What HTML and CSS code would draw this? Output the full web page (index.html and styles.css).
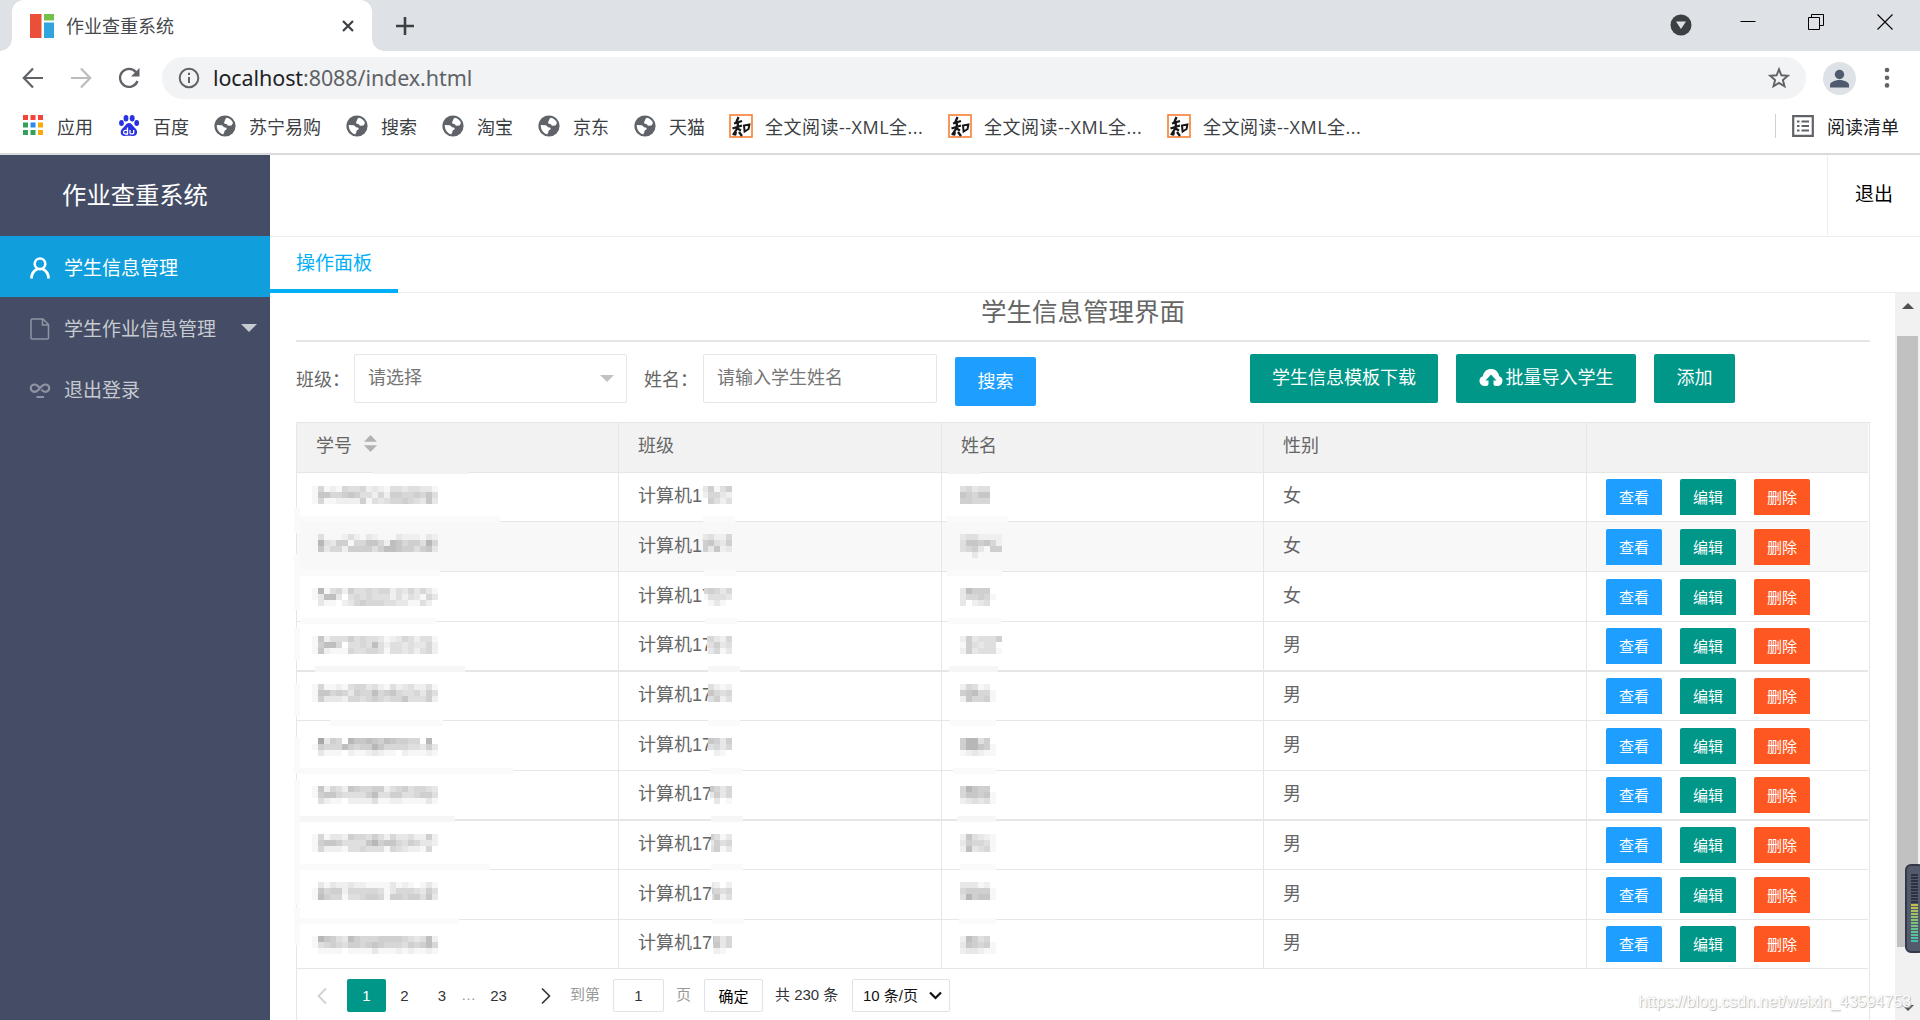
FILE: index.html
```html
<!DOCTYPE html>
<html lang="zh-CN">
<head>
<meta charset="utf-8">
<title>作业查重系统</title>
<link rel="stylesheet" href="styles.css">
</head>
<body>
<svg width="0" height="0" class="defs">
  <symbol id="globe" viewBox="0 0 24 24"><circle cx="12" cy="12" r="10.6" fill="#5f6368"/><path d="M3.800 11l5 .2c1.300.2 1.500 2.300 3.600 2.300 1.800 0 1.600 2.200.2 2.400-1.200.2-1 1.400-1.300 2.300-.2.900-1 1.300-.8 2.200C6.500 19.700 3.500 15.500 3.800 11zM13.500 3.800c3 .3 5.500 2.500 6.500 5.200l-1.500 2.500-2.800.3c-1.400.1-1.200-1.900-2.700-1.900-1.600 0-2.600-.9-1.600-2.200.8-1 .5-2.800 2.100-3.900z" fill="#fff"/></symbol>
  <symbol id="zhi" viewBox="0 0 24 24"><rect x="1" y="1" width="22" height="22" fill="#fff" stroke="#fa7d33" stroke-width="1.600"/><path d="M9.500 3L7 9M5 9.500l8-2.500M3.500 14.500l9.500-3M9 8.500L8.500 14l-4.500 7M8.500 14.500l3.500 2M7 18l-1 3.500M10 18l3 4" fill="none" stroke="#161616" stroke-width="2.300"/><path d="M15 11.500l.6 6 4-2.500.8-4.500z" fill="none" stroke="#161616" stroke-width="2"/></symbol>
</svg>

<header class="tabstrip">
  <div class="tab">
    <svg width="24" height="24" viewBox="0 0 24 24"><path fill="#ec4f38" d="M0 0h11.500v24H0z"/><path fill="#75c04b" d="M14 0h10v6.500H14z"/><path fill="#31a3dd" d="M14 8.500h10V24H14z"/></svg>
    <span class="tab-title">作业查重系统</span>
    <svg class="tab-close" width="12" height="12" viewBox="0 0 12 12"><path d="M1 1l10 10M11 1L1 11" stroke="#3c4043" stroke-width="2.200"/></svg>
  </div>
  <svg class="new-tab" width="18" height="18" viewBox="0 0 18 18"><path d="M9 0v18M0 9h18" stroke="#3c4043" stroke-width="2.600"/></svg>
  <div class="window-controls">
    <svg width="22" height="22" viewBox="0 0 22 22"><circle cx="11" cy="11" r="10.500" fill="#3c4043"/><path d="M6 7.500h10L11 15z" fill="#dee1e6"/></svg>
    <svg width="16" height="16" viewBox="0 0 16 16"><path d="M.5 7.500h15" stroke="#000"/></svg>
    <svg width="16" height="16" viewBox="0 0 16 16"><path d="M.5 3.500h11v12H.5zM3.500 3.500v-3h12v11h-3.500" fill="none" stroke="#000"/></svg>
    <svg width="16" height="16" viewBox="0 0 16 16"><path d="M.5.5l15 15M15.500.5l-15 15" stroke="#000" stroke-width="1.100"/></svg>
  </div>
</header>

<div class="toolbar">
  <svg width="24" height="24" viewBox="0 0 24 24"><path d="M22 12H3M12 2.500L2.800 12l9.200 9.500" fill="none" stroke="#5f6368" stroke-width="2.200"/></svg>
  <svg width="24" height="24" viewBox="0 0 24 24"><path d="M2 12h19M12 2.500l9.200 9.500-9.200 9.500" fill="none" stroke="#babcbe" stroke-width="2.200"/></svg>
  <svg width="24" height="24" viewBox="0 0 24 24"><path d="M20.500 15A9 9 0 1 1 19 6.200" fill="none" stroke="#5f6368" stroke-width="2.300"/><path d="M22.500 2v8.500H14z" fill="#5f6368"/></svg>
  <div class="address">
    <svg width="22" height="22" viewBox="0 0 22 22"><circle cx="11" cy="11" r="9.300" fill="none" stroke="#5f6368" stroke-width="2"/><path d="M11 10v6M11 5.800V8" stroke="#5f6368" stroke-width="2"/></svg>
    <span class="url"><b>localhost</b>:8088/index.html</span>
    <svg class="star" width="24" height="24" viewBox="0 0 24 24"><path d="M12 3.300l2.400 6 6.400.5-4.900 4.200 1.600 6.300L12 16.900l-5.500 3.400L8.100 14 3.200 9.800l6.400-.5z" fill="none" stroke="#5f6368" stroke-width="1.900"/></svg>
  </div>
  <span class="avatar"><svg width="33" height="33" viewBox="0 0 33 33"><circle cx="16.500" cy="12.500" r="4.700" fill="#4f5a6e"/><path d="M7 25.500v-2.500c0-3.300 6.300-5 9.500-5s9.500 1.700 9.500 5v2.500z" fill="#4f5a6e"/></svg></span>
  <svg class="menu-dots" width="6" height="22" viewBox="0 0 6 22"><g fill="#5f6368"><circle cx="3" cy="3" r="2.300"/><circle cx="3" cy="10.700" r="2.300"/><circle cx="3" cy="18.400" r="2.300"/></g></svg>
</div>

<nav class="bookmarks">
  <a><svg width="24" height="24" viewBox="0 0 24 24"><path fill="#f4433b" d="M2 1h5v5H2zM9.500 1h5v5h-5zM17 1h5v5h-5z"/><path fill="#34a05a" d="M2 8.500h5v5H2zM2 16h5v5H2zM9.500 16h5v5h-5z"/><path fill="#2a8af0" d="M9.500 8.500h5v5h-5z"/><path fill="#f9ab0b" d="M17 8.500h5v5h-5zM17 16h5v5h-5z"/></svg><span>应用</span></a>
  <a><svg width="24" height="24" viewBox="0 0 24 24"><g fill="#2932e1"><ellipse cx="4.500" cy="9" rx="2.400" ry="3"/><ellipse cx="9" cy="4.200" rx="2.400" ry="3.200"/><ellipse cx="15.200" cy="4.200" rx="2.400" ry="3.200"/><ellipse cx="19.700" cy="9" rx="2.400" ry="3"/><path d="M12 9c3 0 4 3.500 6 5 3.500 3 2.500 8-2 8-2 0-6-.4-8 0-5 .5-5.500-5.500-2-8 2-1.500 3-5 6-5z"/></g><path d="M10.500 13.500V20H8.200c-2.200 0-2.200-3.700 0-3.700h2.300M13 16v3c0 1.200 3.700 1.400 3.700 0v-3" fill="none" stroke="#fff" stroke-width="1.300"/></svg><span>百度</span></a>
  <a><svg width="24" height="24"><use href="#globe"/></svg><span>苏宁易购</span></a>
  <a><svg width="24" height="24"><use href="#globe"/></svg><span>搜索</span></a>
  <a><svg width="24" height="24"><use href="#globe"/></svg><span>淘宝</span></a>
  <a><svg width="24" height="24"><use href="#globe"/></svg><span>京东</span></a>
  <a><svg width="24" height="24"><use href="#globe"/></svg><span>天猫</span></a>
  <a><svg width="24" height="24"><use href="#zhi"/></svg><span class="long">全文阅读--XML全...</span></a>
  <a><svg width="24" height="24"><use href="#zhi"/></svg><span class="long">全文阅读--XML全...</span></a>
  <a><svg width="24" height="24"><use href="#zhi"/></svg><span class="long">全文阅读--XML全...</span></a>
  <div class="reading-list"><svg width="22" height="22" viewBox="0 0 22 22"><path d="M1.200 1.200h19.600v19.600H1.200z" fill="none" stroke="#5f6368" stroke-width="2.200"/><path d="M5 6.500h2.500M9.500 6.500H17M5 11h2.500M9.500 11H17M5 15.500h2.500M9.500 15.500H17" stroke="#5f6368" stroke-width="2.200"/></svg><span>阅读清单</span></div>
</nav>

<div class="app">
  <aside class="sidebar">
    <h1>作业查重系统</h1>
    <a class="nav-item active"><svg width="20" height="22" viewBox="0 0 20 22"><circle cx="10" cy="6.800" r="5.300" fill="none" stroke="#fff" stroke-width="2.600"/><path d="M1.500 21.500c0-5 2.500-8 6-9.500M18.500 21.500c0-5-2.500-8-6-9.500" fill="none" stroke="#fff" stroke-width="2.800"/></svg><span>学生信息管理</span></a>
    <a class="nav-item"><svg width="20" height="22" viewBox="0 0 20 22"><path d="M1 2.200q0-1.200 1.200-1.200H13l5.500 5.500V20q0 1-1 1H2q-1 0-1-1zM12.500 1v6h6" fill="none" stroke="#8f94a2" stroke-width="1.500"/></svg><span>学生作业信息管理</span><i class="caret"></i></a>
    <a class="nav-item"><svg width="22" height="18" viewBox="0 0 22 18"><path d="M11 7.500C8.500 4 7.200 3.500 5.500 3.500a3.700 3.700 0 1 0 0 7.400c2.500 0 4-1.700 5.500-3.700s3-3.700 5.500-3.700a3.700 3.700 0 1 1 0 7.400c-1.700 0-3-1-4-2.300" fill="none" stroke="#8f94a2" stroke-width="2.200"/><path d="M7.500 16h7.500" stroke="#8f94a2" stroke-width="2"/></svg><span>退出登录</span></a>
  </aside>
  <main class="main">
    <div class="topbar"><a class="logout">退出</a></div>
    <div class="page-tabs"><span class="page-tab">操作面板</span></div>
    <div class="viewport">
      <section class="content">
        <h2>学生信息管理界面</h2>
        <form class="filters">
          <label>班级：</label>
          <div class="field select">请选择<i class="caret"></i></div>
          <label class="name-label">姓名：</label>
          <div class="field name">请输入学生姓名</div>
          <span class="btn blue search">搜索</span>
          <span class="btn template">学生信息模板下载</span>
          <span class="btn import"><svg width="24" height="22" viewBox="0 0 24 22"><path d="M7 19H5.500A5 5 0 0 1 3.800 9.300C4.600 4.500 8 2 12 2s7.400 2.500 8.200 7.300A5 5 0 0 1 18.500 19H17q-2.500 0-2.500-2.500V13.500h3L12 7.500 6.500 13.500h3v3Q9.500 19 7 19z" fill="#fff"/></svg>批量导入学生</span>
          <span class="btn add">添加</span>
        </form>
        <div class="table">
          <div class="row head"><div>学号<i class="sort"></i></div><div>班级</div><div>姓名</div><div>性别</div><div></div></div>
          <div class="rows"></div>
          <svg class="mosaic" width="720" height="560" shape-rendering="crispEdges"></svg>
          <div class="pager">
            <svg class="prev" width="10" height="18" viewBox="0 0 10 18"><path d="M9 1.500L1.500 9 9 16.500" fill="none" stroke="#d2d2d2" stroke-width="1.800"/></svg>
            <span class="current">1</span><span class="p2">2</span><span class="p3">3</span><span class="dots">…</span><span class="p23">23</span>
            <svg class="next" width="10" height="18" viewBox="0 0 10 18"><path d="M1 1.500L8.500 9 1 16.500" fill="none" stroke="#333" stroke-width="1.600"/></svg>
            <span class="muted goto">到第</span><span class="box num">1</span><span class="muted ye">页</span><span class="box ok">确定</span><span class="total">共 230 条</span>
            <span class="box size">10 条/页<svg width="13" height="9" viewBox="0 0 13 9"><path d="M1 1.500l5.500 5.500L12 1.500" fill="none" stroke="#111" stroke-width="2.200"/></svg></span>
          </div>
        </div>
      </section>
      <div class="scrollbar"><i class="up"></i><i class="thumb"></i><i class="down"></i></div>
      <div class="meter"><i class="off"></i><i class="on"></i></div>
      <div class="watermark">https://blog.csdn.net/weixin_43594753</div>
    </div>
  </main>
</div>
<script src="table.js"></script>
</body>
</html>
```

FILE: styles.css
```css
* { box-sizing: border-box; }
body {
  margin: 0; width: 1920px; height: 1020px; overflow: hidden; background: #fff;
  font-family: "Liberation Sans", "Noto Sans CJK SC", sans-serif; color: #666;
  display: flex; flex-direction: column; white-space: nowrap;
}
svg { flex: none; display: block; }
i { font-style: normal; }
.defs { position: absolute; }

.tabstrip { height: 51px; flex: none; background: #dee1e6; display: flex; align-items: center; font-family: "Noto Sans CJK SC", sans-serif; }
.tab { width: 360px; height: 51px; margin-left: 12px; padding: 0 18px; background: #fff; border-radius: 12px 12px 0 0; display: flex; align-items: center; position: relative; }
.tab::before, .tab::after { content: ""; position: absolute; bottom: 0; width: 12px; height: 12px; }
.tab::before { left: -12px; background: radial-gradient(circle at 0 0, transparent 11.500px, #fff 12px); }
.tab::after { right: -12px; background: radial-gradient(circle at 100% 0, transparent 11.500px, #fff 12px); }
.tab-title { margin-left: 12px; padding-bottom: 2px; font-size: 18px; color: #45494d; }
.tab-close { margin-left: auto; }
.new-tab { margin-left: 24px; }
.window-controls { margin-left: auto; margin-right: 27px; display: grid; grid-template-columns: 70px 68px 69px 16px; height: 51px; padding-top: 14px; }

.toolbar { height: 54px; flex: none; display: flex; align-items: center; padding-left: 21px; gap: 24px; }
.address { width: 1644px; height: 42px; margin-left: -3px; border-radius: 21px; background: #f1f3f4; display: flex; align-items: center; padding: 0 15px 0 16px; }
.url { margin-left: 13px; font: 21.500px/42px "Noto Sans", sans-serif; color: #5f6368; letter-spacing: -.09px; }
.url b { font-weight: 400; color: #202124; }
.star { margin-left: auto; }
.avatar { width: 33px; height: 33px; border-radius: 50%; background: #dee1e6; margin-left: -7px; }
.menu-dots { margin-left: 4px; }

.bookmarks { height: 50px; flex: none; padding: 0 21px 7px; border-bottom: 2px solid #d9dade; display: flex; align-items: center; gap: 24px; font: 18px/40px "Open Sans", "Noto Sans CJK SC", sans-serif; color: #3c4043; }
.bookmarks a, .reading-list { display: flex; align-items: center; gap: 12px; height: 30px; }
.bookmarks .long { width: 159px; letter-spacing: .5px; }
.reading-list { margin-left: auto; }
.bookmarks .reading-list { border-left: 1px solid #cfd1d4; height: 24px; padding-left: 16px; gap: 13px; color: #202124; }
.bookmarks span { padding-top: 2px; }

.app { display: flex; flex: 1; min-height: 0; }
.sidebar { width: 270px; background: #454d66; color: #c7cad1; }
.sidebar h1 { margin: 0; height: 81px; font: 24.300px/77px "Noto Sans CJK SC", sans-serif; color: #fff; text-align: center; }
.nav-item { height: 61px; display: flex; align-items: center; padding: 0 13px 0 29px; font-size: 19px; }
.nav-item span { margin-left: 13px; }
.nav-item .caret { margin-left: auto; }
.nav-item.active { background: #109fdc; color: #fff; }
.nav-item svg { width: 22px; margin-top: 3px; }
.caret { width: 0; height: 0; border: 8.500px solid transparent; border-top-color: #c7cad1; border-bottom: 0; }
.main { flex: 1; min-width: 0; display: flex; flex-direction: column; }
.topbar { height: 82px; flex: none; border-bottom: 1px solid #eee; display: flex; justify-content: flex-end; }
.logout { width: 93px; height: 80px; border-left: 1px solid #eee; color: #000; font-size: 19px; line-height: 79px; text-align: center; }
.page-tabs { height: 56px; flex: none; border-bottom: 1px solid #eee; }
.page-tab { display: block; width: 128px; height: 56px; padding-left: 26px; border-bottom: 4px solid #01aff8; color: #01aff8; font-size: 19px; line-height: 54px; }
.viewport { flex: 1; min-height: 0; display: flex; position: relative; }
.content { width: 1625px; padding: 0 25px 0 26px; height: 727px; }
h2 { margin: 0; height: 49px; border-bottom: 2px solid #e6e6e6; font-size: 25.500px; font-weight: 400; line-height: 39px; text-align: center; color: #666; }

.filters { display: flex; align-items: flex-start; height: 80px; margin: 0; padding-top: 12px; font-size: 18px; }
.filters label { width: 58px; line-height: 52px; }
.filters .name-label { margin-left: 17px; width: 59px; }
.field { height: 49px; border: 1px solid #e6e6e6; border-radius: 2px; line-height: 47px; padding-left: 13px; color: #757575; }
.field.select { width: 273px; display: flex; justify-content: space-between; align-items: center; padding-right: 12px; }
.field .caret { border-width: 7.500px 7.500px 0; border-top-color: #c2c2c2; }
.field.name { width: 234px; }
.btn { height: 49px; border-radius: 2px; background: #009688; color: #fff; line-height: 49px; text-align: center; }
.blue { background: #1e9fff; }
.search { width: 81px; margin: 3px 0 0 18px; line-height: 51px; }
.template { width: 188px; margin-left: 214px; }
.import { width: 180px; margin-left: 18px; display: flex; justify-content: center; gap: 3px; }
.import svg { margin-top: 13px; }
.add { width: 81px; margin-left: 18px; }

.table { position: relative; border: 1px solid #e6e6e6; border-bottom: 0; height: 598px; font-size: 18px; width: 1574px; }
.row { width: 1571px; display: grid; grid-template-columns: 322px 323px 322px 323px 281px; height: 50px; border-bottom: 1px solid #e6e6e6; }
.row > div { border-right: 1px solid #e6e6e6; padding-left: 19px; line-height: 47px; }
.row > div:last-child { border-right: 0; display: flex; gap: 18px; }
.head { background: #f2f2f2; }
.sort { display: inline-block; width: 13px; height: 17px; margin-left: 12px; background: #b2b2b2; clip-path: polygon(50% 0, 100% 40%, 0 40%, 0 60%, 100% 60%, 50% 100%, 0 60%, 0 40%); }
.row.short { height: 49px; }
.row.thick { border-bottom-width: 2px; }
.row.alt { background: #f8f8f8; }
.row.low > div { line-height: 49px; }
.row .op { width: 56px; height: 36px; margin-top: 6px; border-radius: 2px 2px 0 0; font-size: 15px; line-height: 37px; text-align: center; color: #fff; background: #009688; }
.low .op { margin-top: 7px; }
.row .view { background: #1e9fff; }
.row .del { background: #ff5722; }
.mosaic { position: absolute; left: -3px; top: 0; }

.pager { display: flex; align-items: center; padding: 10px 0 0 20px; font-size: 15px; color: #333; }
.pager > span { line-height: 32px; height: 33px; text-align: center; }
.pager .current { width: 39px; margin-left: 20px; border-radius: 2px; background: #009688; color: #fff; line-height: 33px; }
.p2 { width: 37px; }
.p3 { width: 38px; }
.pager .dots { width: 14px; color: #999; }
.p23 { width: 47px; }
.pager .p2, .pager .p3, .pager .p23 { line-height: 33px; }
.next { margin-left: 19px; }
.pager .muted { color: #999; }
.pager .goto { margin-left: 19px; width: 30px; }
.box { border: 1px solid #e2e2e2; border-radius: 2px; }
.num { width: 51px; margin-left: 13px; }
.pager .ye { width: 15px; margin-left: 12px; }
.ok { width: 59px; margin-left: 13px; color: #000; }
.pager .ok { line-height: 34px; }
.total { margin-left: 12px; width: 63px; }
.size { width: 98px; margin-left: 14px; display: flex; align-items: center; justify-content: space-between; padding: 0 7px 0 10px; color: #111; }

.scrollbar { width: 25px; background: #f1f1f1; display: flex; flex-direction: column; align-items: center; }
.up { border: 6px solid transparent; border-bottom-color: #505050; border-top: 0; margin-top: 10px; }
.thumb { width: 21px; height: 611px; margin-top: 27px; background: #c1c1c1; }
.down { border: 6px solid transparent; border-top-color: #505050; border-bottom: 0; margin-top: 58px; }
.meter { position: absolute; right: -4px; top: 571px; width: 19px; height: 89px; border: 2px solid #343848; border-radius: 6px; background: #535a6c; padding: 8px 0 0 4px; }
.meter i { display: block; width: 7px; }
.meter .off { height: 30px; background: repeating-linear-gradient(#2d3241 0 2px, #535a6c 2px 3px); }
.meter .on { height: 39px; background: repeating-linear-gradient(transparent 0 2px, #535a6c 2px 3px), linear-gradient(#c5bf4a, #7fc47a 45%, #3fc0ad); }
.watermark { position: absolute; right: 9px; bottom: 7px; font-size: 16px; line-height: 22px; color: #fff; text-shadow: 1px 1px 1px #bbb, 0 0 1px #ccc; letter-spacing: .01px; }
```

FILE: table.js
```javascript
// Student rows; identifying digits are hidden behind a pixel mosaic.
const genders = '女女女男男男男男男男';
const shortRows = [0, 4, 7, 9], thickRows = [3, 6], lowRows = [1, 2, 5, 8];
document.querySelector('.rows').innerHTML = [...genders].map((g, i) => {
  const cls = ['row', shortRows.includes(i) && 'short', thickRows.includes(i) && 'thick',
    lowRows.includes(i) && 'low', i === 1 && 'alt'].filter(Boolean).join(' ');
  return `<div class="${cls}"><div></div><div>计算机17</div><div></div><div>${g}</div>` +
    '<div><span class="op view">查看</span><span class="op">编辑</span><span class="op del">删除</span></div></div>';
}).join('');

// Each digit is the darkness of one 6px cell.
const tops = [486, 534, 588, 636, 684, 738, 786, 834, 882, 936];
const idCells = [
  ['151215445232144344331', '177556764425266556574', '151122226143455654373'],
  ['041112421321113222132', '194366155775287566495', '173552666646887664673'],
  ['191452644545524353531', '138830454544424243153', '031102356555443311420'],
  ['172444645443123542441', '168850445484244343352', '172111544554144342452'],
  ['151121455342142342241', '177565365585675445364', '163332554565455744462'],
  ['0b3650977876876655090', '165558656697555544363', '031110211232110211121'],
  ['172542765566245645543', '167754444684466445664', '042110222241122111131'],
  ['151332655464253342262', '167764444796775465332', '152221445444154322150'],
  ['031322322111131210131', '175662555554135554364', '186551445665166566473'],
  ['197643865556666543482', '145654665676555465685', '011110111131112121121']
];
const nameCells = [
  ['45344', '76577', '66555'], ['3442222', '4776752', '4563066', '003000'],
  ['38666', '355652', '30234'], ['2634446', '164344', '2634441'],
  ['25412', '678556', '275560'], ['69946', '699767', '123210'],
  ['59766', '577678', '234340'], ['274325', '365541', '283450'],
  ['33312', '566665', '496770'], ['28645', '376567', '233210']
];
const classCells = [
  ['36146', '25532', '06424'], ['34225', '67436', '63723'],
  ['56535', '14443', '01310'], ['45325', '34634', '13513'],
  ['54212', '57545', '24624'], ['67636', '24535', '00210'],
  ['57535', '33635', '00301'], ['56413', '53645', '14613'],
  ['33202', '66545', '34724'], ['78635', '66735', '01210']
];
const classLeft = [703, 703, 704, 707, 708, 708, 710, 711, 712, 713];
let out = '';
// The svg starts at (294, 423) in page pixels.
const rect = (x, y, w, h, fill) => { out += `<rect x="${x - 294}" y="${y - 423}" width="${w}" height="${h}" fill="${fill}"/>`; };
const gray = c => { const v = 255 - 8 * parseInt(c, 16); return `rgb(${v},${v},${v})`; };
const cells = (x, y, lines, min) => lines.forEach((line, r) => [...line].forEach((c, k) => {
  const left = Math.max(x + 6 * k, min || 0), right = x + 6 * k + 6;
  if (right > left && c !== '0') rect(left, y + 6 * r, right - left, 6, gray(c));
}));

// Faint smears left where the mosaic brush crossed the grid lines.
const bands = [
  [516, 294, 500, 703, 735, 947, 1008], [570, 294, 440, 704, 736, 947, 1002],
  [618, 301, 436, 705, 737, 948, 1001], [666, 315, 465, 708, 740, 949, 998],
  [720, 330, 443, 708, 740, 950, 996], [768, 294, 513, 710, 742, 953, 996],
  [816, 294, 455, 711, 743, 957, 996], [864, 294, 490, 711, 743, 960, 996],
  [918, 294, 459, 712, 744, 959, 996]
];
bands.forEach(([y, ...xs]) => {
  for (let k = 0; k < 6; k += 2) rect(xs[k], y, xs[k + 1] - xs[k], 6, y === 666 || y === 816 ? '#f6f6f6' : '#fafafa');
});
[[508, 25], [554, 56], [628, 32], [684, 32], [737, 31], [780, 50], [830, 75], [907, 38]]
  .forEach(([y, h]) => rect(294, y, 6, h, '#fafafa'));
rect(373, 472, 96, 2, '#f2f2f2');
rect(947, 472, 33, 2, '#f2f2f2');

tops.forEach((y, i) => {
  cells(312, y, idCells[i]);
  const bg = i === 1 ? '#f8f8f8' : '#fff';
  rect(classLeft[i], y - 3, 735 - classLeft[i], 24, bg);
  cells(702, y, classCells[i], classLeft[i]);
  cells(960, y, nameCells[i].map(line => line.length === 6 && i !== 1 && i !== 3 ? line.slice(0, 5) + '1' : line));
});
document.querySelector('.mosaic').innerHTML = out;
```
